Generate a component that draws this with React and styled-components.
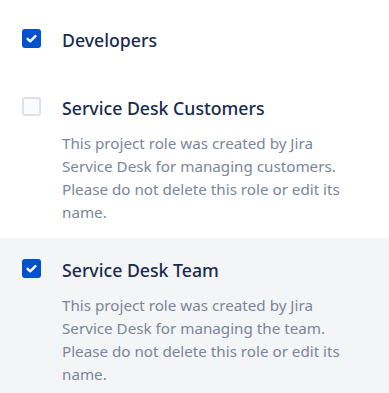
import React from "react";
import styled, { createGlobalStyle } from "styled-components";

const GlobalStyle = createGlobalStyle`
  html, body { margin: 0; padding: 0; background: #ffffff; }
  body { font-family: "Noto Sans", "Open Sans", sans-serif; -webkit-font-smoothing: antialiased; }
`;

const List = styled.div`
  display: flex;
  flex-direction: column;
  padding-top: 8px;
`;

const Row = styled.div`
  display: grid;
  grid-template-columns: 19px 1fr;
  column-gap: 21px;
  align-items: start;
  padding: 18px 29px ${(p) => (p.$compact ? "22px" : "14px")} 22px;
  background: ${(p) => (p.$highlight ? "#F4F5F7" : "transparent")};
`;

const Box = styled.span`
  display: block;
  width: 19px;
  height: 19px;
  margin-top: 3px;
  box-sizing: border-box;
  border-radius: 3px;
  background: ${(p) => (p.$checked ? "#0052CC" : "#FAFBFC")};
  border: ${(p) => (p.$checked ? "none" : "2px solid #DFE1E6")};
  svg { display: block; }
`;

const Content = styled.div`
  display: flex;
  flex-direction: column;
`;

const Title = styled.div`
  font-size: 17.7px;
  line-height: 28px;
  font-weight: 500;
  color: #172B4D;
  white-space: nowrap;
`;

const Description = styled.div`
  margin-top: 10px;
  font-size: 15.2px;
  line-height: 23px;
  color: #7A869A;
`;

function Checkbox({ checked }) {
  return (
    <Box $checked={checked}>
      {checked && (
        <svg width="19" height="19" viewBox="0 0 19 19">
          <path
            d="M5.6 9.8 L8.2 12.3 L13.4 7.1"
            fill="none"
            stroke="#ffffff"
            strokeWidth="2.4"
            strokeLinecap="round"
            strokeLinejoin="round"
          />
        </svg>
      )}
    </Box>
  );
}

const roles = [
  { name: "Developers", checked: true },
  {
    name: "Service Desk Customers",
    checked: false,
    desc: "This project role was created by Jira Service Desk for managing customers. Please do not delete this role or edit its name.",
  },
  {
    name: "Service Desk Team",
    checked: true,
    highlight: true,
    desc: "This project role was created by Jira Service Desk for managing the team. Please do not delete this role or edit its name.",
  },
];

export default function App() {
  return (
    <>
      <GlobalStyle />
      <List>
        {roles.map((r) => (
          <Row key={r.name} $compact={!r.desc} $highlight={r.highlight}>
            <Checkbox checked={r.checked} />
            <Content>
              <Title>{r.name}</Title>
              {r.desc && <Description>{r.desc}</Description>}
            </Content>
          </Row>
        ))}
      </List>
    </>
  );
}
